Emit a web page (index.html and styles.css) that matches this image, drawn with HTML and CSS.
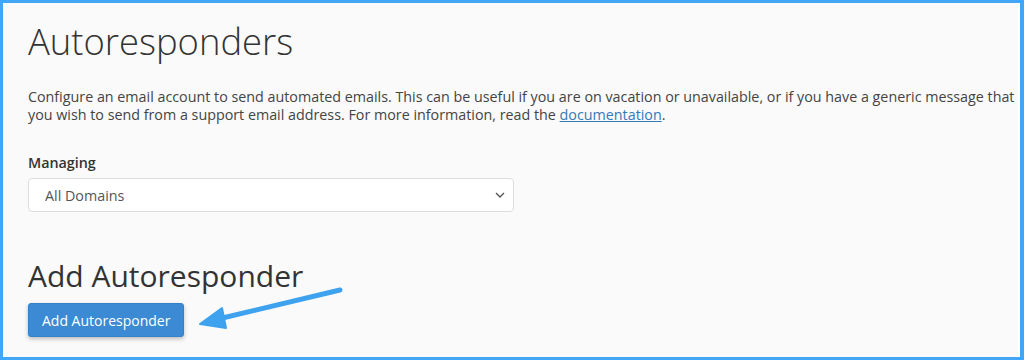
FILE: index.html
```html
<!DOCTYPE html>
<html lang="en">
  <head>
    <meta charset="UTF-8" />
    <meta name="viewport" content="width=device-width, initial-scale=1.0" />
    <title>Autoresponders</title>
    <link rel="stylesheet" href="styles.css">
  </head>
  <body>
    <div class="frame">
      <div class="page">
        <h1>Autoresponders</h1>

        <p class="intro">Configure an email account to send automated emails. This can be useful if you are on vacation or unavailable, or if you have a generic message that you wish to send from a support email address. For more information, read the <a href="#">documentation</a>.</p>

        <div class="field">
          <label for="domain">Managing</label>
          <div class="select-wrap">
            <select id="domain">
              <option>All Domains</option>
            </select>
            <svg class="chevron" width="10" height="6" viewBox="0 0 10 6">
              <path d="M1 1 L5 5 L9 1" fill="none" stroke="#555" stroke-width="1.4" />
            </svg>
          </div>
        </div>

        <h2>Add Autoresponder</h2>
        <div class="actions">
          <button class="btn-primary">Add Autoresponder</button>
          <!-- annotation arrow -->
          <svg class="arrow" width="160" height="50" viewBox="0 0 160 50">
            <path d="M144 6 L18 36" stroke="#3ea2ef" stroke-width="5" stroke-linecap="round" fill="none" />
            <path d="M4 40 L26 24 L30 44 Z" fill="#3ea2ef" stroke="#3ea2ef" stroke-width="2" stroke-linejoin="round" />
          </svg>
        </div>
      </div>
    </div>
  </body>
</html>
```

FILE: styles.css
```css
* {
  box-sizing: border-box;
}

body {
  margin: 0;
  font-family: "Open Sans", "Noto Sans", sans-serif;
  color: #333;
  background: #fafafa;
}

.frame {
  height: 360px;
  border: 3px solid #42a5f5;
  border-right-width: 4px;
}

.page {
  height: 100%;
  background: #fafafa;
  border-right: 2px solid #fff;
  padding: 14px 0 0 25px;
}

h1 {
  margin: 0;
  font-size: 36.4px;
  font-weight: 300;
  line-height: 48px;
  color: #333;
}

.intro {
  margin: 23px 0 0;
  font-size: 14.3px;
  line-height: 18px;
  color: #444;
}

.intro a {
  color: #337ab7;
  text-decoration: underline;
}

.field {
  margin-top: 29px;
}

.field label {
  display: block;
  font-size: 14.3px;
  font-weight: 600;
  line-height: 20px;
  color: #333;
  margin-bottom: 5px;
}

.select-wrap {
  position: relative;
  width: 486px;
}

select {
  appearance: none;
  width: 100%;
  height: 34px;
  padding: 0 16px;
  font-family: inherit;
  font-size: 14.3px;
  color: #555;
  background: #fff;
  border: 1px solid #ddd;
  border-radius: 4px;
}

.chevron {
  position: absolute;
  right: 9px;
  top: 14px;
}

h2 {
  margin: 46px 0 0;
  font-size: 30px;
  font-weight: 400;
  line-height: 36px;
  color: #333;
}

.actions {
  position: relative;
  margin-top: 9px;
}

.btn-primary {
  height: 34px;
  padding: 0 13px;
  font-family: inherit;
  font-size: 14px;
  color: #fff;
  background: #3b8ad3;
  border: 1px solid #3580c6;
  border-radius: 3px;
  box-shadow: 0 2px 4px rgba(0, 0, 0, 0.25);
  cursor: pointer;
}

.arrow {
  position: absolute;
  left: 168px;
  top: -19px;
}
```
